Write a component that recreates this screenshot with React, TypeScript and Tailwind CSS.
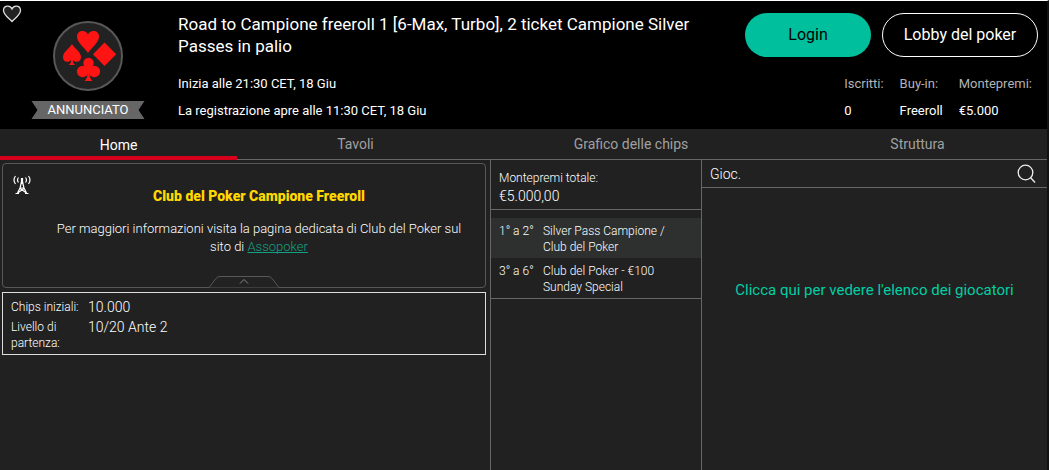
import type { ReactNode } from "react";

const tabs = ["Home", "Tavoli", "Grafico delle chips", "Struttura"];

const stats = [
  { label: "Iscritti:", value: "0" },
  { label: "Buy-in:", value: "Freeroll" },
  { label: "Montepremi:", value: "€5.000" },
];

const prizes = [
  { place: "1° a 2°", prize: "Silver Pass Campione / Club del Poker" },
  { place: "3° a 6°", prize: "Club del Poker - €100 Sunday Special" },
];

function SuitsLogo() {
  return (
    <svg width="70" height="70" viewBox="0 0 70 70" aria-hidden="true">
      <circle cx="35" cy="35" r="34" fill="#222" stroke="#585858" strokeWidth="2" />
      <g fill="#ff1414">
        <path d="M35 32 C33 28 24 22 24 15.500 C24 12 26.500 10 29.500 10 C32 10 34.200 11.500 35 13.500 C35.800 11.500 38 10 40.500 10 C43.500 10 46 12 46 15.500 C46 22 37 28 35 32Z" />
        <path d="M51.500 21.500 L63.200 33.200 L51.500 45 L40 33.200Z" />
        <path d="M19 23 C22 28 28 31 28 36 C28 41.500 22 42 19.800 39 C20 41.500 20.500 43 22.500 44 H15.500 C17.500 43 18 41.500 18.200 39 C16 42 10 41.500 10 36 C10 31 16 28 19 23Z" />
        <circle cx="35.500" cy="42" r="5.200" />
        <circle cx="29.700" cy="50.500" r="5.800" />
        <circle cx="41.300" cy="50.500" r="5.800" />
        <path d="M33 43 H38 L36.300 52 Q36.800 58 39.500 60 H31.500 Q34.200 58 34.700 52Z" />
      </g>
    </svg>
  );
}

function HeartIcon() {
  return (
    <svg width="20" height="18" viewBox="0 0 20 18" fill="#222" stroke="#ddd" strokeWidth="1.300">
      <path d="M10 16.500 C7 13 1.500 10 1.500 5.500 C1.500 0.500 8 -0.500 10 4 C12 -0.500 18.500 0.500 18.500 5.500 C18.500 10 13 13 10 16.500Z" />
    </svg>
  );
}

function AntennaIcon() {
  return (
    <svg width="20" height="20" viewBox="0 0 20 20" fill="none" stroke="#fff" strokeWidth="1.200" aria-hidden="true">
      <path d="M10 3 V9" strokeWidth="2.200" />
      <path d="M9.500 7 L8 13 L5.500 18 M10.500 7 L12 13 L14.500 18 M8 13 H12 M5.500 18 L12 13.500 M14.500 18 L8 13.500 M3.500 18.500 H7 M13 18.500 H16.500" />
      <path d="M6.500 2.500 Q4.500 5 6.500 7.500 M13.500 2.500 Q15.500 5 13.500 7.500 M3.500 1 Q0.500 5 3.500 9 M16.500 1 Q19.500 5 16.500 9" />
    </svg>
  );
}

function SearchIcon() {
  return (
    <svg width="19" height="20" viewBox="0 0 19 20" fill="none" stroke="#eee" strokeWidth="1.300">
      <circle cx="8.500" cy="8.500" r="7.300" />
      <path d="M13.500 13.500 L18 18.500" />
    </svg>
  );
}

function Row({ label, children }: { label: string; children: ReactNode }) {
  return (
    <div className="flex">
      <dt className="w-[77px] text-[12px] leading-4 pt-0.5">{label}</dt>
      <dd className="text-[14px] leading-5">{children}</dd>
    </div>
  );
}

function Header() {
  return (
    <header className="flex h-32 bg-black text-white">
      <div className="relative w-[178px] shrink-0">
        <button aria-label="Preferiti" className="absolute top-1 left-0.5">
          <HeartIcon />
        </button>
        <div className="flex flex-col items-center pt-5 pr-0.5 gap-2.5">
          <SuitsLogo />
          <span className="bg-[#666] px-4 text-[13px] leading-[18px] [clip-path:polygon(0_0,100%_0,calc(100%-6px)_50%,100%_100%,0_100%,6px_50%)]">
            ANNUNCIATO
          </span>
        </div>
      </div>
      <div className="flex-1 pt-3">
        <h1 className="max-w-[530px] text-[17px] leading-[22px]">
          Road to Campione freeroll 1 [6-Max, Turbo], 2 ticket Campione Silver Passes in palio
        </h1>
        <p className="mt-[13px] text-[13px] leading-[27px]">
          Inizia alle 21:30 CET, 18 Giu
          <br />
          La registrazione apre alle 11:30 CET, 18 Giu
        </p>
      </div>
      <div className="flex flex-col items-end pt-3 pr-[9px]">
        <div className="flex gap-[11px] text-[16px]">
          <button className="h-11 w-[126px] rounded-full bg-[#00bf9c] text-black">Login</button>
          <button className="h-11 w-[156px] rounded-full border border-white">Lobby del poker</button>
        </div>
        <dl className="mt-[13px] mr-1.5 flex gap-4 text-[13px] leading-[27px]">
          {stats.map((s) => (
            <div key={s.label}>
              <dt className="text-[#b3b3b3]">{s.label}</dt>
              <dd>{s.value}</dd>
            </div>
          ))}
        </dl>
      </div>
    </header>
  );
}

function Tabs() {
  return (
    <nav className="grid h-[30px] grid-cols-[237fr_237fr_314fr_259fr] text-[14px]">
      {tabs.map((tab, i) => (
        <button
          key={tab}
          className={
            i === 0
              ? "border-b-4 border-[#d6001c] pt-1.5 text-white"
              : "border-b border-[#666] text-[#a0a0a0]"
          }
        >
          {tab}
        </button>
      ))}
    </nav>
  );
}

function HomePanel() {
  return (
    <section className="w-[490px] shrink-0 pt-1 pr-1 pl-0.5">
      <div className="relative h-[125px] rounded-[4px] border border-[#585858] pt-[23px] pl-[30px] text-center">
        <div className="absolute top-[11px] left-[9px]">
          <AntennaIcon />
        </div>
        <h2 className="text-[14px] leading-[18px] font-black text-[#ffd800]">Club del Poker Campione Freeroll</h2>
        <p className="mx-auto mt-[15px] w-[420px] text-[13px] leading-[18px] font-light">
          Per maggiori informazioni visita la pagina dedicata di Club del Poker sul sito di{" "}
          <a href="#" className="inline-block text-[#12a283] underline [text-decoration-skip-ink:none]">
            Assopoker
          </a>
        </p>
        <button aria-label="Chiudi" className="absolute -bottom-px left-1/2 -translate-x-1/2">
          <svg width="72" height="12" viewBox="0 0 72 12" fill="#222" stroke="#585858">
            <path d="M0 11.500 H1 L8 2.500 Q9.500 0.500 12 0.500 H60 Q62.500 0.500 64 2.500 L71 11.500 H72" />
            <path d="M32 7.500 L36 3.500 L40 7.500" stroke="#888" />
          </svg>
        </button>
      </div>
      <dl className="mt-1 border border-[#ddd] px-2 pt-1 pb-[3px] font-light text-white">
        <Row label="Chips iniziali:">10.000</Row>
        <Row label="Livello di partenza:">10/20 Ante 2</Row>
      </dl>
    </section>
  );
}

function Prizes() {
  return (
    <section className="w-[212px] shrink-0 border-x border-t border-[#666] font-light">
      <div className="border-b border-[#666] px-2 pt-2.5 pb-1">
        <p className="text-[12px] leading-[17px]">Montepremi totale:</p>
        <p className="text-[14px] leading-[18px]">€5.000,00</p>
      </div>
      <table className="mt-2 w-full border-b border-[#666] text-[12px] leading-4">
        <tbody>
          {prizes.map((p) => (
            <tr key={p.place} className="align-top odd:bg-[#2d302f]">
              <td className="w-11 pt-[5px] pb-[3px] pl-2 whitespace-nowrap">{p.place}</td>
              <td className="pt-[5px] pr-7 pb-[3px] pl-2">{p.prize}</td>
            </tr>
          ))}
        </tbody>
      </table>
    </section>
  );
}

function Players() {
  return (
    <section className="flex flex-1 flex-col border-t border-[#666]">
      <div className="flex h-7 items-center justify-between border-b border-[#666] pr-[11px] pl-2">
        <h2 className="text-[14px] leading-5 font-light">Gioc.</h2>
        <button aria-label="Cerca">
          <SearchIcon />
        </button>
      </div>
      <button className="mt-[92px] px-2 text-[15px] leading-5 text-[#00cfa5]">
        Clicca qui per vedere l'elenco dei giocatori
      </button>
    </section>
  );
}

export default function App() {
  return (
    <div className="flex min-h-screen flex-col border-t border-r-2 border-t-white border-r-[#111] bg-[#212121] font-['Roboto',sans-serif] text-white">
      <Header />
      <Tabs />
      <main className="flex flex-1">
        <HomePanel />
        <Prizes />
        <Players />
      </main>
    </div>
  );
}
